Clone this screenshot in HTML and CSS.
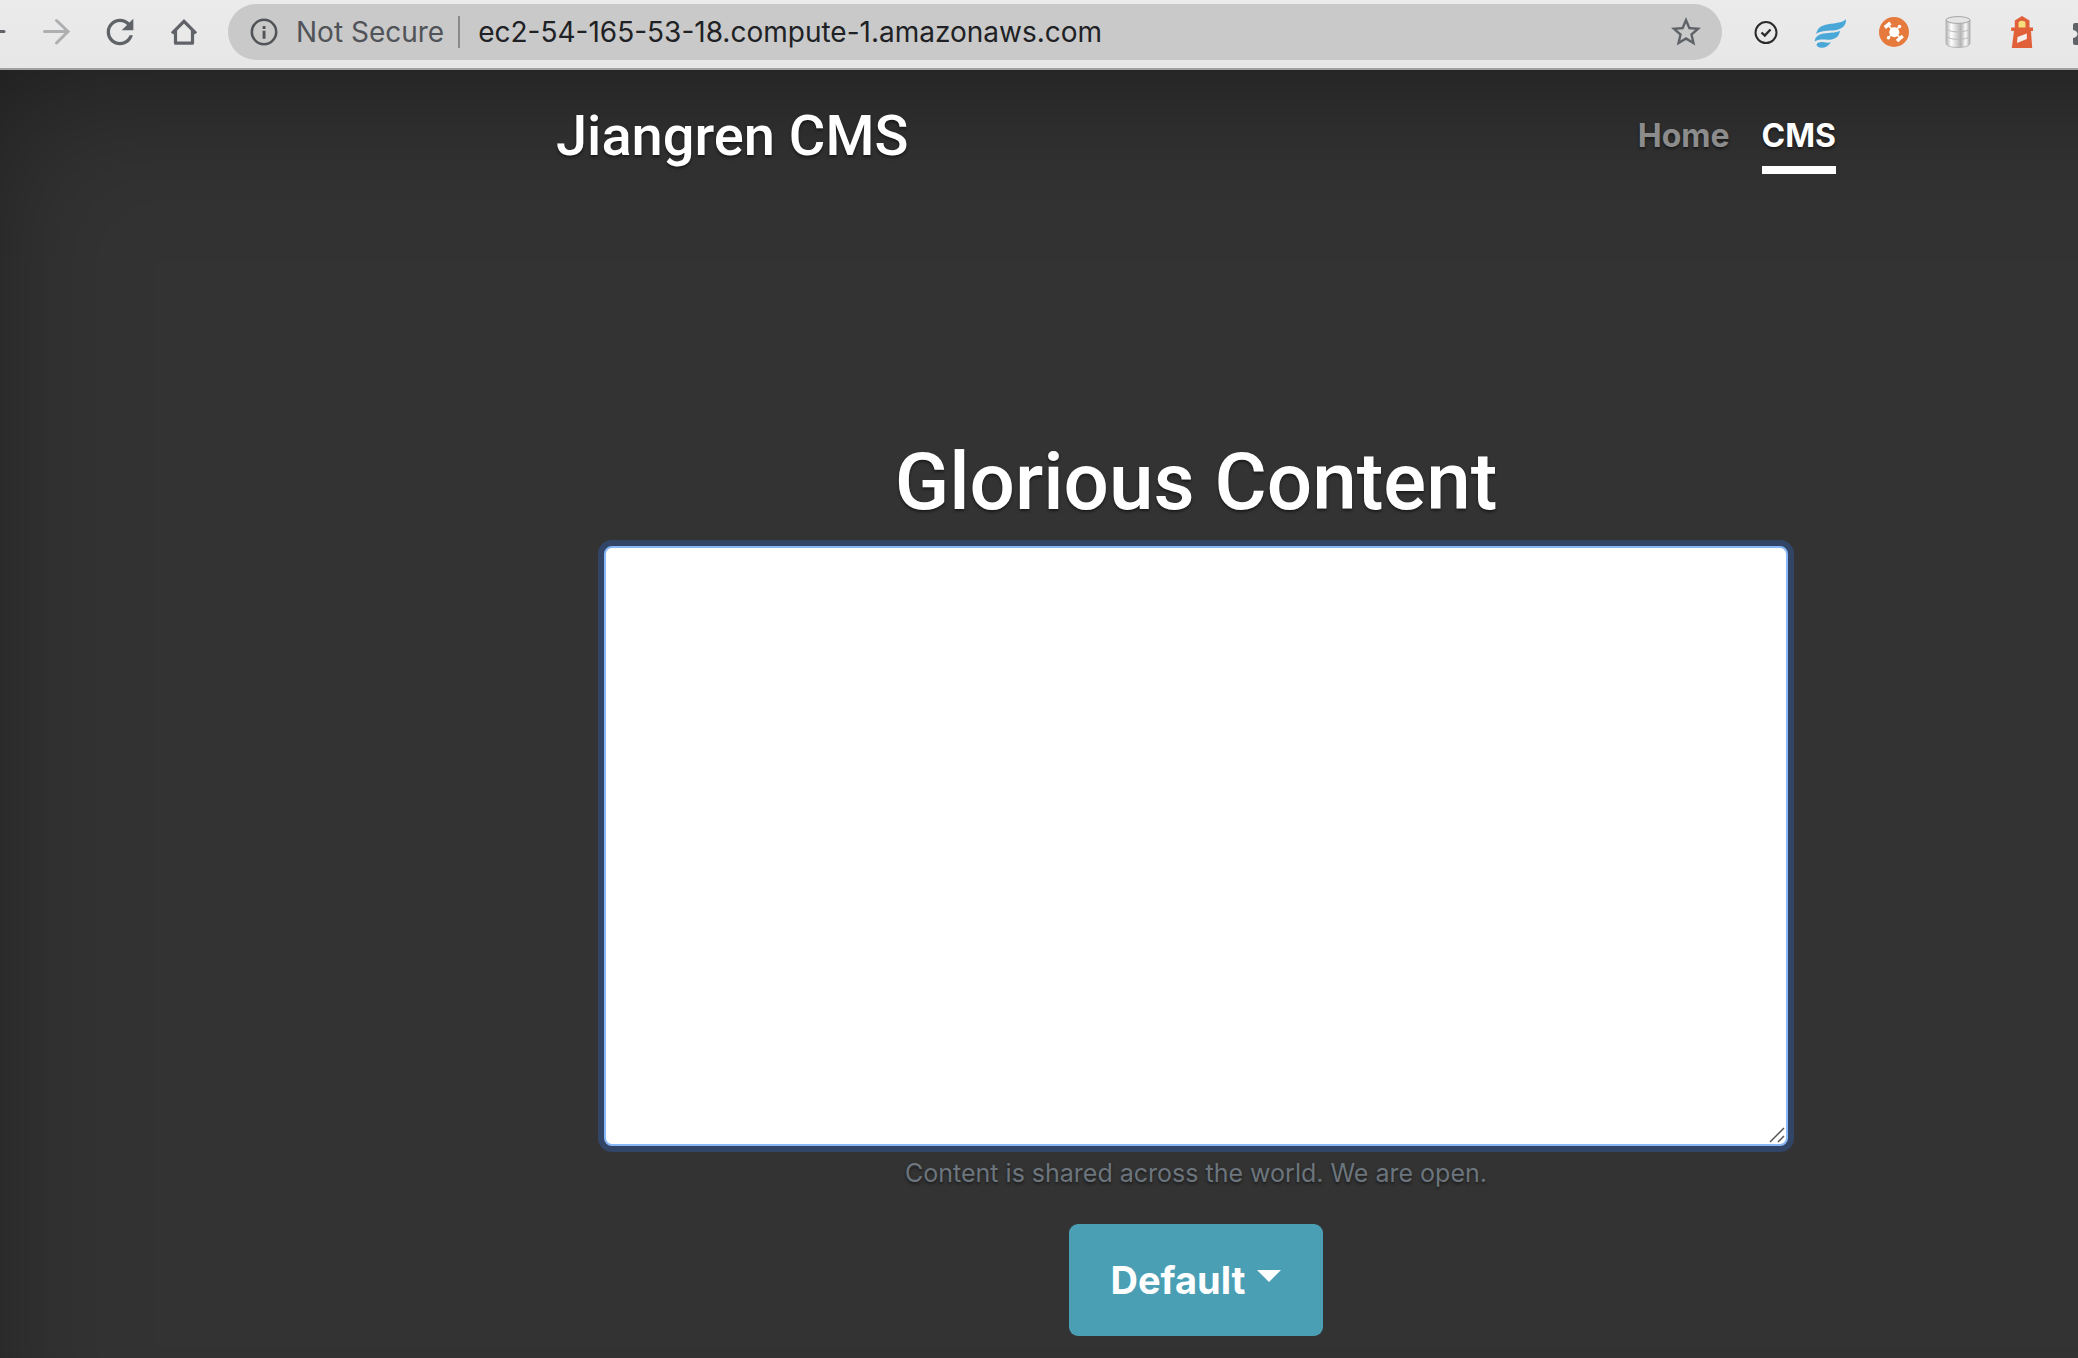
FILE: index.html
```html
<!DOCTYPE html>
<html lang="en">
<head>
<meta charset="utf-8">
<title>Jiangren CMS</title>
<link rel="stylesheet" href="styles.css">
</head>
<body>
<div class="toolbar">
  <div class="toolbar-row">
    <button class="tool" type="button" aria-label="Back">
      <svg viewBox="0 0 40 40" fill="none" stroke="#5f6368" stroke-width="3" stroke-linecap="round"><path d="M32 19.500H8M19 8L8 19.500L19 31"/></svg>
    </button>
    <button class="tool" type="button" aria-label="Forward">
      <svg viewBox="0 0 40 40" fill="none" stroke="#adafb1" stroke-width="3" stroke-linecap="round"><path d="M8.500 19.500H32M20.500 8.500L32 19.500L20.500 31"/></svg>
    </button>
    <button class="tool" type="button" aria-label="Reload">
      <svg viewBox="0 0 24 24" fill="#5f6368"><path d="M17.650 6.350C16.200 4.900 14.210 4 12 4c-4.420 0-7.990 3.580-7.990 8s3.570 8 7.990 8c3.730 0 6.840-2.550 7.730-6h-2.080c-.82 2.330-3.040 4-5.650 4-3.310 0-6-2.690-6-6s2.690-6 6-6c1.660 0 3.140.69 4.220 1.780L13 11h7V4l-2.350 2.350z"/></svg>
    </button>
    <button class="tool" type="button" aria-label="Home page">
      <svg viewBox="0 0 40 40" fill="none" stroke="#5f6368" stroke-width="3.200" stroke-linejoin="round"><path d="M11.500 18V31.200H28.500V18" /><path d="M8 21.300L20 9.300L32 21.300" stroke-linejoin="miter"/></svg>
    </button>
    <div class="address">
      <svg class="info" viewBox="0 0 28 28" aria-hidden="true"><circle cx="14" cy="14" r="12.200" fill="none" stroke="#505357" stroke-width="2.500"/><path fill="#505357" d="M12.600 8h2.900v2.900h-2.900zM12.600 12.800h2.900v8h-2.900z"/></svg>
      <span class="secure">Not Secure</span>
      <input class="url" type="text" aria-label="Address" value="ec2-54-165-53-18.compute-1.amazonaws.com">
      <svg class="star" viewBox="0 0 24 24" fill="#5f6368" aria-hidden="true"><path d="M22 9.240l-7.190-.62L12 2 9.190 8.630 2 9.240l5.460 4.730L5.820 21 12 17.270 18.180 21l-1.630-7.030L22 9.240zM12 15.400l-3.760 2.270 1-4.280-3.320-2.880 4.380-.38L12 6.100l1.710 4.040 4.380.38-3.320 2.880 1 4.280L12 15.400z"/></svg>
    </div>
    <button class="tool" type="button" aria-label="Tasks">
      <svg viewBox="0 0 40 40" fill="none" stroke="#2b2b2b"><circle cx="20" cy="20.600" r="10.500" stroke-width="2"/><path d="M15.500 20.500L18.800 23.600L24.500 17.500" stroke-width="2.400"/></svg>
    </button>
    <button class="tool" type="button" aria-label="Feather">
      <svg viewBox="0 0 40 40" fill="#4aa8d8"><path d="M6.200 22C7.500 15.500 11 13.500 18 12.200C26 11 33 10.500 36 7.200C36.500 14 31 18 22.500 18.500C15 18.700 10 19 6.200 22Z"/><path d="M4.800 29.500C5 24 9 22 16 21.200C22 20.700 27 20.500 30 18.800C29 25.500 24 28 17.500 27.800C12 27.400 8 27.300 4.800 29.500Z"/><path d="M6.500 32.500C8 29.800 11 29.700 14 30.300C17 30.900 19.500 30.800 21 30.300C18 34.500 15 36 11.500 35.800C8.500 35.500 6.500 34.500 6.500 32.500Z"/></svg>
    </button>
    <button class="tool" type="button" aria-label="Network">
      <svg viewBox="0 0 40 40"><circle cx="20" cy="20" r="15" fill="#e57a3c"/><path d="M14 13L26 26M25.500 14.500L14.500 25.500" stroke="#fff" stroke-width="1.600"/><circle cx="20.300" cy="20.300" r="5" fill="#fff"/><circle cx="25.500" cy="14.500" r="1.800" fill="#fff"/><circle cx="14.500" cy="25.800" r="1.800" fill="#fff"/><path d="M10.800 15.500L16.500 11M23 29L28.800 24" stroke="#fff" stroke-width="3.600"/></svg>
    </button>
    <button class="tool" type="button" aria-label="Database">
      <svg viewBox="0 0 40 40"><defs><linearGradient id="steel"><stop offset="0" stop-color="#b0b0b0"/><stop offset=".22" stop-color="#fff"/><stop offset=".4" stop-color="#ddd"/><stop offset=".62" stop-color="#b3b3b3"/><stop offset=".82" stop-color="#fafafa"/><stop offset="1" stop-color="#aaa"/></linearGradient></defs><path d="M8 8V31C8 37 32 37 32 31V8Z" fill="url(#steel)" stroke="#b5b5b5" stroke-width="1"/><path d="M8 16.500C11 21 29 21 32 16.500M8 24C11 28.500 29 28.500 32 24" fill="none" stroke="#bbb"/><ellipse cx="20" cy="8" rx="12" ry="3.400" fill="#e5e5e5" stroke="#a5a5a5"/></svg>
    </button>
    <button class="tool" type="button" aria-label="Lighthouse">
      <svg viewBox="0 0 40 40"><path d="M20 4L27.500 8.500V15.500H31V19H29L30.200 36H9.800L12 19H9.200V15.500H12.800V8.500Z" fill="#e1603a"/><path d="M16.500 15.500V11C16.500 8 23.500 8 23.500 11V15.500Z" fill="#f8dd7d"/><path d="M15.500 25L24.800 21.500V27L15 31Z" fill="#f5f0ee"/></svg>
    </button>
    <button class="tool" type="button" aria-label="Extensions">
      <svg viewBox="0 0 40 40" fill="#5f6368"><path d="M9 11H15C15 5 23 5 23 11H30V18C36 18 36 26 30 26V33H9Q7 33 7 31V26C13 25 13 19 7 18V13Q7 11 9 11Z"/></svg>
    </button>
  </div>
</div>

<div class="viewport">
  <div class="page">
    <div class="cover">
      <header class="masthead">
        <h3 class="brand">Jiangren CMS</h3>
        <nav class="nav">
          <a class="nav-link" href="#home">Home</a>
          <a class="nav-link active" href="#cms" aria-current="page">CMS</a>
        </nav>
      </header>
      <main class="content">
        <h1 class="title"><label for="content">Glorious Content</label></h1>
        <div class="editor">
          <textarea class="field" id="content" aria-describedby="help"></textarea>
          <svg class="grip" viewBox="0 0 16 16" fill="none" stroke="#555" stroke-width="1.500" aria-hidden="true"><path d="M1 15L15 1M9 15L15 9"/></svg>
        </div>
        <small class="help" id="help">Content is shared across the world. We are open.</small>
        <button class="dropdown" type="button" aria-haspopup="true">Default<span class="caret"></span></button>
      </main>
    </div>
  </div>
</div>
</body>
</html>
```
FILE: styles.css
```css
* {
  box-sizing: border-box;
}

body {
  margin: 0;
  height: 100vh;
  display: flex;
  flex-direction: column;
  overflow: hidden;
  background: #333;
  color: #fff;
  font-family: Inter, "Liberation Sans", sans-serif;
}

button {
  border: 0;
  font-family: inherit;
}

/* Browser toolbar */
.toolbar {
  flex: none;
  overflow: hidden;
  background: linear-gradient(#ebebeb, #e7e7e7);
  border-bottom: 2px solid #a0a0a0;
}

.toolbar-row {
  display: flex;
  align-items: center;
  margin: 0 -40px;
  padding: 4px 0 8px;
}

.tool {
  flex: none;
  width: 64px;
  height: 56px;
  padding: 0;
  display: grid;
  place-items: center;
  background: none;
}

.tool svg {
  width: 40px;
  height: 40px;
}

.address {
  flex: 1;
  min-width: 0;
  height: 56px;
  margin: 0 12px;
  padding: 0 18px 0 22px;
  display: flex;
  align-items: center;
  border-radius: 28px;
  background: #c9c9c9;
  font-size: 28px;
  line-height: 32px;
}

.info {
  flex: none;
  width: 28px;
  height: 28px;
}

.secure {
  flex: none;
  margin-left: 18px;
  padding-right: 14px;
  border-right: 2px solid #8a8a8c;
  color: #505357;
}

.url {
  flex: 1;
  min-width: 0;
  padding: 0 0 0 18px;
  border: 0;
  outline: 0;
  background: none;
  color: #202124;
  font: inherit;
}

.star {
  flex: none;
  width: 36px;
  height: 36px;
}

/* Web page */
.viewport {
  flex: 1;
  min-height: 0;
  overflow: hidden;
}

.page {
  width: calc(100% + 386px);
  min-height: calc(100% + 180px);
  margin-left: -36px;
  display: flex;
  justify-content: center;
  box-shadow: inset 0 0 160px rgba(0, 0, 0, .5);
  text-shadow: 0 2px 3px rgba(0, 0, 0, .5);
}

.cover {
  width: 100%;
  max-width: 1344px;
  padding: 32px;
}

.masthead {
  display: flex;
  justify-content: space-between;
  align-items: flex-start;
}

.brand,
.title {
  font-family: Roboto, Inter, sans-serif;
  font-weight: 500;
}

.brand {
  margin: 0;
  font-size: 56px;
  line-height: 68px;
}

.nav {
  display: flex;
  gap: 32px;
}

.nav-link {
  padding: 10px 0 6px;
  border-bottom: 8px solid transparent;
  color: #8c8c8c;
  font-size: 32px;
  line-height: 48px;
  font-weight: 700;
  text-decoration: none;
}

.nav-link.active {
  color: #fff;
  border-bottom-color: #fff;
}

.content {
  display: flex;
  flex-direction: column;
  align-items: center;
  margin-top: 260px;
  padding: 0 48px;
}

.title {
  margin: 0 0 16px;
  font-size: 80px;
  line-height: 96px;
}

.editor {
  position: relative;
  width: 100%;
}

.field {
  display: block;
  width: 100%;
  height: 600px;
  padding: 12px 24px;
  border: 2px solid #88b8f8;
  border-radius: 8px;
  outline: 0;
  resize: none;
  background: #fff;
  box-shadow: 0 0 0 6px #324566;
  font: inherit;
  font-size: 32px;
}

.grip {
  position: absolute;
  right: 3px;
  bottom: 3px;
  width: 16px;
  height: 16px;
}

.help {
  margin-top: 8px;
  color: #6c757d;
  font-size: 25px;
  line-height: 38px;
}

.dropdown {
  margin-top: 32px;
  padding: 26px 42px;
  display: flex;
  align-items: center;
  gap: 12px;
  border-radius: 9px;
  background: #4a9fb5;
  color: #fff;
  font-size: 38px;
  line-height: 60px;
  font-weight: 700;
}

.caret {
  margin-bottom: 8px;
  border-top: 12px solid #fff;
  border-left: 12px solid transparent;
  border-right: 12px solid transparent;
}
```
